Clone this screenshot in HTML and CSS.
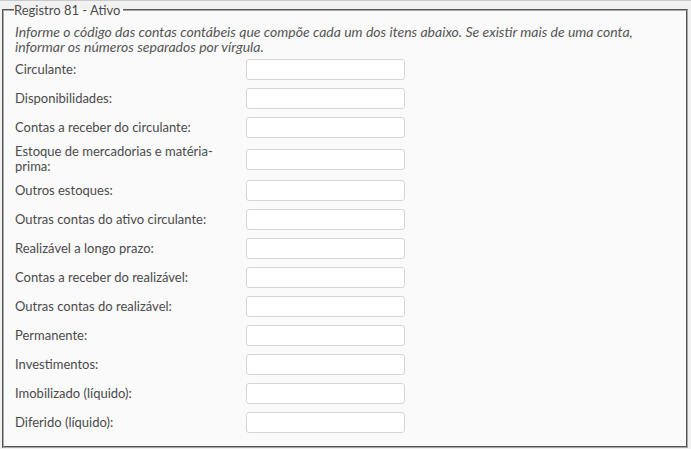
FILE: index.html
```html
<!DOCTYPE html>
<html lang="pt-BR">
<head>
<meta charset="utf-8">
<link rel="stylesheet" href="styles.css">
</head>
<body>
<div class="page">
  <fieldset class="registro">
    <legend class="registro-title">Registro 81 - Ativo</legend>
    <p class="hint">Informe o código das contas contábeis que compõe cada um dos itens abaixo. Se existir mais de uma conta, informar os números separados por vírgula.</p>
    <div class="row"><label class="lbl">Circulante:</label><input class="field" type="text"></div>
    <div class="row"><label class="lbl">Disponibilidades:</label><input class="field" type="text"></div>
    <div class="row"><label class="lbl">Contas a receber do circulante:</label><input class="field" type="text"></div>
    <div class="row"><label class="lbl">Estoque de mercadorias e matéria-prima:</label><input class="field" type="text"></div>
    <div class="row"><label class="lbl">Outros estoques:</label><input class="field" type="text"></div>
    <div class="row"><label class="lbl">Outras contas do ativo circulante:</label><input class="field" type="text"></div>
    <div class="row"><label class="lbl">Realizável a longo prazo:</label><input class="field" type="text"></div>
    <div class="row"><label class="lbl">Contas a receber do realizável:</label><input class="field" type="text"></div>
    <div class="row"><label class="lbl">Outras contas do realizável:</label><input class="field" type="text"></div>
    <div class="row"><label class="lbl">Permanente:</label><input class="field" type="text"></div>
    <div class="row"><label class="lbl">Investimentos:</label><input class="field" type="text"></div>
    <div class="row"><label class="lbl">Imobilizado (líquido):</label><input class="field" type="text"></div>
    <div class="row"><label class="lbl">Diferido (líquido):</label><input class="field" type="text"></div>
  </fieldset>
</div>
</body>
</html>
```
FILE: styles.css
```css
html, body {
  margin: 0;
  padding: 0;
  background: #f1f1f1;
}
body {
  font-family: Lato, "Liberation Sans", sans-serif;
  font-size: 13px;
  color: #4a4a4a;
}
.page {
  border-top: 1px solid #c8c8c8;
  padding: 1px 2px 0 2px;
}
.registro {
  margin: 0;
  padding: 0 11px 11px 11px;
  border: 2px groove #a8a8a8;
  background: #fafafa;
  width: 686px;
  box-sizing: border-box;
}
.registro-title {
  padding: 0 3px 0 0;
  margin-left: -1px;
  font-size: 13px;
  line-height: 16px;
  color: #4a4a4a;
}
.hint {
  margin: 6px 0 3px 0;
  max-width: 640px;
  font-style: italic;
  font-size: 14px;
  line-height: 15px;
  color: #555;
}
.row {
  display: flex;
  align-items: center;
  min-height: 25px;
  margin-bottom: 4px;
}
.row:last-child { margin-bottom: 0; }
.lbl {
  width: 216px;
  margin-right: 15px;
  line-height: 15px;
}
.field {
  width: 159px;
  height: 21px;
  box-sizing: border-box;
  margin: 0;
  border: 1px solid #d6d6d6;
  border-radius: 3px;
  background: #fff;
  padding: 2px 4px;
}
```
